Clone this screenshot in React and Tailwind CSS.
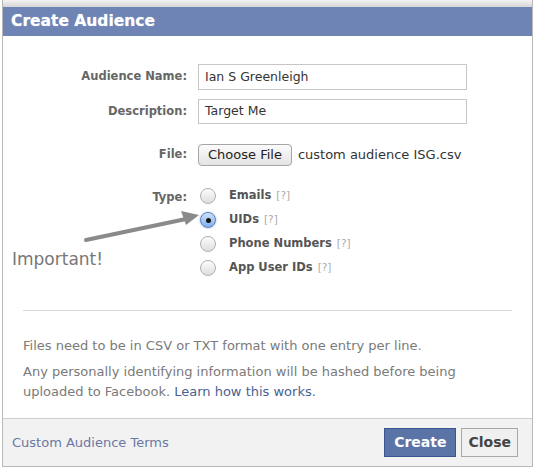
import React from 'react';

const font = "font-['DejaVu_Sans',sans-serif]";

function Radio({ checked }) {
  if (checked) {
    return (
      <span className="flex h-[16px] w-[16px] items-center justify-center rounded-full border border-[#5a7fc0] bg-gradient-to-b from-[#cfe2fb] to-[#7fb0ee] shadow-[0_0_2px_#7fa7e0]">
        <span className="h-[5px] w-[5px] rounded-full bg-[#111]" />
      </span>
    );
  }
  return (
    <span className="block h-[16px] w-[16px] rounded-full border border-[#b0b0b0] bg-gradient-to-b from-[#fdfdfd] to-[#dedede]" />
  );
}

const types = [
  { label: 'Emails', checked: false },
  { label: 'UIDs', checked: true },
  { label: 'Phone Numbers', checked: false },
  { label: 'App User IDs', checked: false },
];

export default function App() {
  return (
    <div className={`relative h-[469px] w-[540px] bg-white ${font}`}>
      <div className="ml-[2px] flex h-[467px] w-[531px] flex-col border-x border-b border-[#b8b8b8]">
        {/* shadow strip */}
        <div className="h-[7px] bg-gradient-to-b from-[#f3f3f3] to-[#d6d6d6]" />

        {/* header */}
        <div className="flex h-[29px] items-center bg-[#6d84b4] pl-[8px]">
          <h1 className="text-[15.5px] font-bold text-white [text-shadow:0_0_1px_rgba(255,255,255,0.6)]">Create Audience</h1>
        </div>

        {/* body */}
        <div className="flex-1 px-[20px] pt-[28px]">
          <div className="grid grid-cols-[164px_1fr] items-center gap-x-[11px]">
            <span className="text-right text-[11.5px] font-bold text-[#666]">Audience Name:</span>
            <div className="flex h-[26px] w-[269px] items-center border border-[#c6c6c6] px-[6px] text-[12.5px] text-[#333]">
              Ian S Greenleigh
            </div>

            <span className="mt-[9px] text-right text-[11.5px] font-bold text-[#666]">Description:</span>
            <div className="mt-[9px] flex h-[25px] w-[269px] items-center border border-[#c6c6c6] px-[6px] text-[12.5px] text-[#333]">
              Target Me
            </div>

            <span className="mt-[20px] text-right text-[11.5px] font-bold text-[#666]">File:</span>
            <div className="mt-[20px] flex items-center gap-[6px]">
              <button className="h-[22px] rounded-[4px] border border-[#a5a5a5] bg-gradient-to-b from-[#fbfbfb] to-[#e4e4e4] px-[9px] text-[13px] text-[#222]">
                Choose File
              </button>
              <span className="text-[13px] text-[#333]">custom audience ISG.csv</span>
            </div>

            <span className="mt-[18px] self-start pt-[5px] text-right text-[11.5px] font-bold text-[#666]">Type:</span>
            <div className="mt-[18px] flex flex-col">
              {types.map((t) => (
                <div key={t.label} className="flex h-[24px] items-center pl-[2px]">
                  <Radio checked={t.checked} />
                  <span className="ml-[13px] text-[11.5px] font-bold text-[#555]">{t.label}</span>
                  <span className="ml-[5px] text-[10.5px] text-[#aaa]">[?]</span>
                </div>
              ))}
            </div>
          </div>

          <div className="mt-[30px] h-px bg-[#d8d8d8]" />

          <p className="mt-[25px] text-[13px] leading-[20px] text-[#7a7a7a]">
            Files need to be in CSV or TXT format with one entry per line.
          </p>
          <p className="mt-[6px] text-[13px] leading-[20px] text-[#7a7a7a]">
            Any personally identifying information will be hashed before being uploaded to Facebook.{' '}
            <span className="text-[#4a5f94]">Learn how this works.</span>
          </p>
        </div>

        {/* footer */}
        <div className="flex h-[48px] items-center justify-between border-t border-[#cfcfcf] bg-[#f2f2f2] pl-[9px] pr-[14px]">
          <span className="text-[13px] text-[#6b78a3]">Custom Audience Terms</span>
          <div className="flex gap-[5px]">
            <button className="h-[29px] border border-[#3a5590] bg-[#5b74a8] px-[9px] text-[14px] font-bold text-white">
              Create
            </button>
            <button className="h-[29px] border border-[#a8a8a8] bg-[#f0f0f0] px-[6px] text-[14px] font-bold text-[#444]">
              Close
            </button>
          </div>
        </div>
      </div>

      {/* annotation */}
      <svg className="absolute left-0 top-0" width="540" height="469" viewBox="0 0 540 469">
        <line x1="86" y1="240" x2="186" y2="219" stroke="#8a8a8a" strokeWidth="4" strokeLinecap="round" />
        <polygon points="199,215 181,211 186,225" fill="#8a8a8a" />
      </svg>
      <span className="absolute left-[12px] top-[247px] text-[17px] leading-[24px] text-[#777]">Important!</span>
    </div>
  );
}
